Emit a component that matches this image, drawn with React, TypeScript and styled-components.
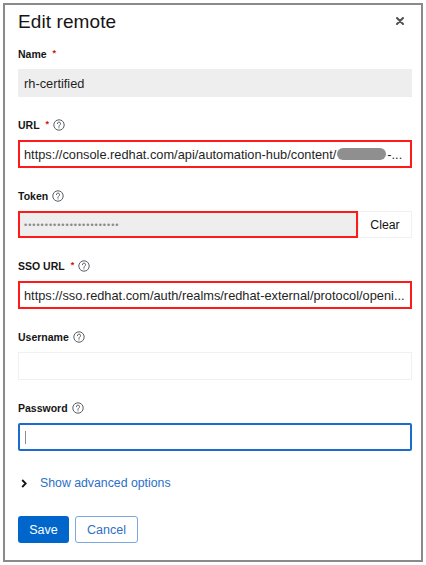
import React from 'react';
import styled, { createGlobalStyle, css } from 'styled-components';

const Global = createGlobalStyle`
  html, body { margin: 0; padding: 0; background: #fff; }
  body { font-family: "Liberation Sans", Arial, sans-serif; color: #151515; }
  * { box-sizing: border-box; }
`;

const Frame = styled.div`
  margin: 3px 0 0 3px;
  width: 420px;
  height: 559px;
  border: 2px solid #8a8a8a;
  background: #fff;
  padding: 0 9px 0 13px;
  display: flex;
  flex-direction: column;
`;

const Header = styled.div`
  height: 32px;
  margin-bottom: 10px;
  display: flex;
  align-items: center;
  justify-content: space-between;
`;

const Title = styled.h1`
  margin: 0;
  font-size: 19px;
  font-weight: 400;
  line-height: 1;
  color: #151515;
  letter-spacing: 0.1px;
`;

const CloseButton = styled.button`
  width: 24px;
  height: 24px;
  border: none;
  background: none;
  padding: 0;
  display: flex;
  align-items: center;
  justify-content: center;
  color: #4f5255;
`;

const Form = styled.div`
  display: flex;
  flex-direction: column;
  gap: 21px;
`;

const Field = styled.div`
  display: flex;
  flex-direction: column;
  gap: 8px;
`;

const Label = styled.div`
  height: 14px;
  display: flex;
  align-items: center;
  font-size: 10.5px;
  font-weight: 700;
  color: #151515;
`;

const Required = styled.span`
  color: #c9190b;
  font-size: 9px;
  margin-left: 6px;
  margin-top: -3px;
`;

const HelpWrap = styled.span`
  display: inline-flex;
  margin-left: 4px;
  color: #5a5e63;
`;

type BoxVariant = 'default' | 'readonly' | 'focused';

const InputBox = styled.div<{ $variant?: BoxVariant; $flagged?: boolean }>`
  height: 28px;
  display: flex;
  align-items: center;
  padding: 0 6px;
  font-size: 12.8px;
  color: #1f1f1f;
  white-space: nowrap;
  overflow: hidden;
  background: #fff;
  box-shadow: inset 0 0 0 1px #f0f0f0, inset 0 -1px 0 #c4c6c8;
  ${(p) =>
    p.$variant === 'readonly' &&
    css`
      background: #eeeeee;
      box-shadow: none;
    `}
  ${(p) =>
    p.$variant === 'focused' &&
    css`
      border-radius: 2px;
      box-shadow: inset 0 0 0 2px #1b6ccd;
    `}
  ${(p) =>
    p.$flagged &&
    css`
      box-shadow: inset 0 0 0 2px #ff1a1a;
    `}
`;

const Redacted = styled.span`
  display: inline-block;
  flex: none;
  width: 49px;
  height: 12px;
  border-radius: 6px;
  background: #8f8f8f;
  filter: blur(0.6px);
  margin: 0 1px;
`;

const Dots = styled.span`
  font-size: 9px;
  letter-spacing: 1px;
  color: #8a8a8a;
`;

const Caret = styled.span`
  width: 1px;
  height: 13px;
  background: #8a8d90;
  margin-left: 1px;
`;

const InputGroup = styled.div`
  display: flex;
  height: 27px;
  & > ${InputBox} {
    flex: 1;
    height: 100%;
  }
`;

const ClearButton = styled.button`
  width: 54px;
  height: 100%;
  border: none;
  background: #fff;
  box-shadow: inset 0 0 0 1px #f0f0f0, inset 0 -1px 0 #d2d2d2;
  font-family: inherit;
  font-size: 12.3px;
  color: #151515;
  padding: 0;
`;

const Toggle = styled.div`
  margin-top: 24px;
  height: 16px;
  display: flex;
  align-items: center;
  gap: 13px;
  padding-left: 3px;
  font-size: 12.3px;
  color: #2b6fc9;
`;

const Actions = styled.div`
  margin-top: 25px;
  display: flex;
  gap: 6px;
`;

const Button = styled.button<{ $primary?: boolean; $w: number }>`
  width: ${(p) => p.$w}px;
  height: 27px;
  border-radius: 3px;
  font-family: inherit;
  font-size: 12.5px;
  padding: 0;
  ${(p) =>
    p.$primary
      ? css`
          background: #0066cc;
          color: #fff;
          border: none;
        `
      : css`
          background: #fff;
          color: #2f6fc5;
          border: 1px solid #7aa7df;
        `}
`;

const HelpIcon = () => (
  <HelpWrap>
    <svg width="12" height="12" viewBox="0 0 12 12" fill="none">
      <circle cx="6" cy="6" r="5.2" stroke="currentColor" strokeWidth="1" />
      <path
        d="M4.4 4.7a1.6 1.6 0 1 1 2.25 1.45c-.5.22-.65.55-.65 1v.35"
        stroke="currentColor"
        strokeWidth="1"
        strokeLinecap="round"
      />
      <circle cx="6" cy="8.8" r="0.6" fill="currentColor" />
    </svg>
  </HelpWrap>
);

const FieldLabel = ({ text, required, help }: { text: string; required?: boolean; help?: boolean }) => (
  <Label>
    {text}
    {required && <Required>*</Required>}
    {help && <HelpIcon />}
  </Label>
);

export default function App() {
  return (
    <>
      <Global />
      <Frame>
        <Header>
          <Title>Edit remote</Title>
          <CloseButton aria-label="Close">
            <svg width="8" height="8" viewBox="0 0 8 8">
              <path d="M1 1L7 7M7 1L1 7" stroke="currentColor" strokeWidth="2" strokeLinecap="round" />
            </svg>
          </CloseButton>
        </Header>
        <Form>
          <Field>
            <FieldLabel text="Name" required />
            <InputBox $variant="readonly">rh-certified</InputBox>
          </Field>
          <Field>
            <FieldLabel text="URL" required help />
            <InputBox $flagged>
              https://console.redhat.com/api/automation-hub/content/
              <Redacted />
              -...
            </InputBox>
          </Field>
          <Field>
            <FieldLabel text="Token" help />
            <InputGroup>
              <InputBox $variant="readonly" $flagged>
                <Dots>{'•'.repeat(23)}</Dots>
              </InputBox>
              <ClearButton>Clear</ClearButton>
            </InputGroup>
          </Field>
          <Field>
            <FieldLabel text="SSO URL" required help />
            <InputBox $flagged>
              https://sso.redhat.com/auth/realms/redhat-external/protocol/openi...
            </InputBox>
          </Field>
          <Field>
            <FieldLabel text="Username" help />
            <InputBox />
          </Field>
          <Field>
            <FieldLabel text="Password" help />
            <InputBox $variant="focused">
              <Caret />
            </InputBox>
          </Field>
        </Form>
        <Toggle>
          <svg width="6" height="9" viewBox="0 0 6 9">
            <path d="M1.2 1L4.7 4.5L1.2 8" stroke="#151515" strokeWidth="1.8" fill="none" />
          </svg>
          Show advanced options
        </Toggle>
        <Actions>
          <Button $primary $w={51}>Save</Button>
          <Button $w={63}>Cancel</Button>
        </Actions>
      </Frame>
    </>
  );
}
